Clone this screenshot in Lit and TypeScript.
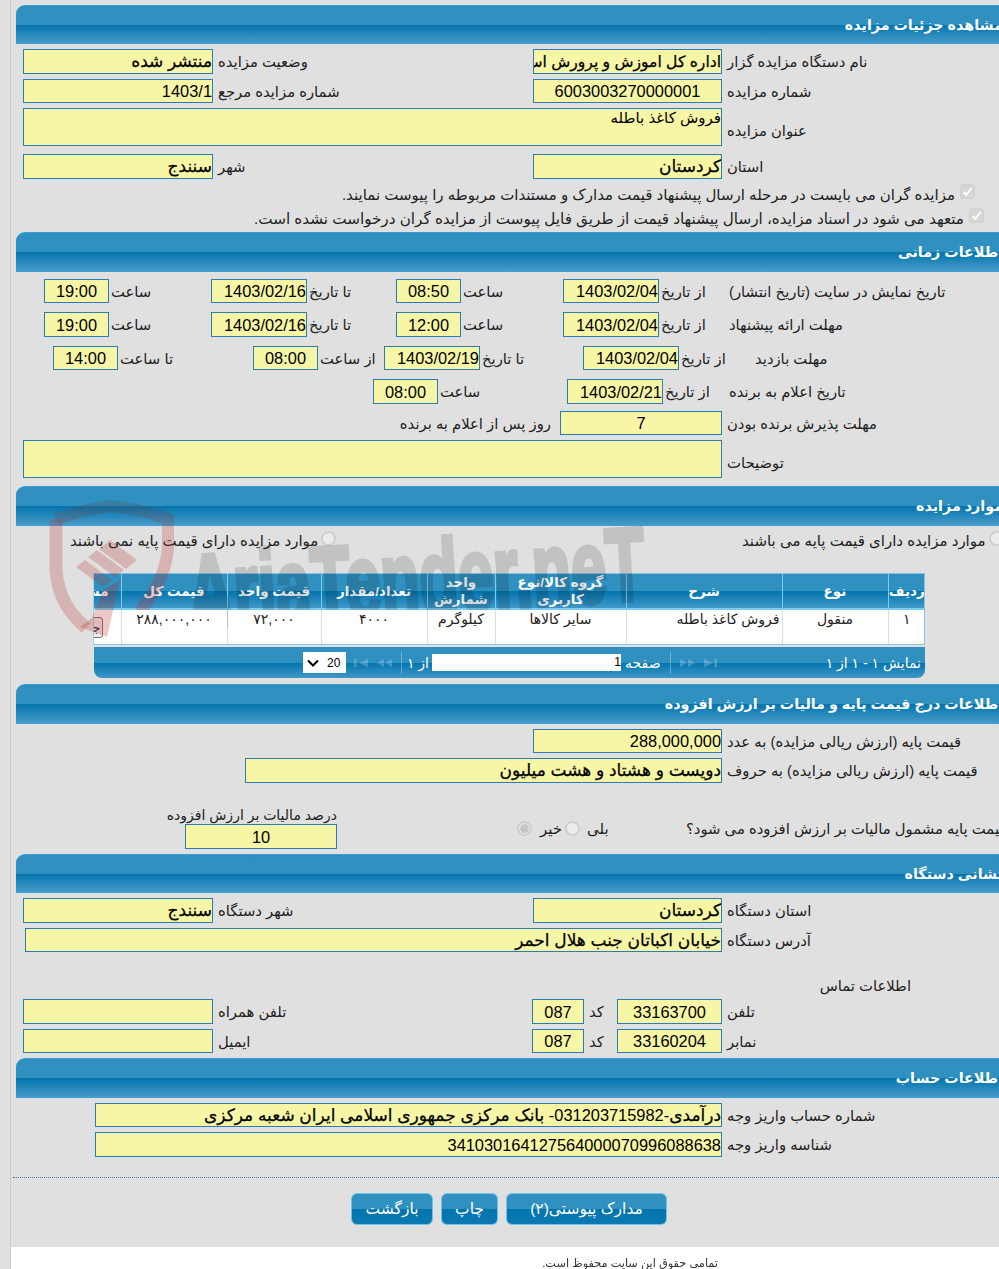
import { LitElement, html, css, svg } from "lit";
import { customElement } from "lit/decorators.js";

const f = (v: unknown, cls = "", ar = false) =>
  html`<div class="f ${cls} ${ar ? "ar" : ""}">${v}</div>`;
const lb = (t: string, cls = "") => html`<span class="lb ${cls}">${t}</span>`;
const cell = (...c: unknown[]) => html`<div class="cell">${c}</div>`;
const head = (t: string, cls = "") => html`<div class="hd ${cls}"><span>${t}</span></div>`;
const check = () => html`<span class="chk"><svg viewBox="0 0 15 15" width="15" height="15"><path d="M3.5 8 L6.3 11 L11.5 4" fill="none" stroke="#fff" stroke-width="2"/></svg></span>`;

const cols = ["radif","now","sharh","group","unit","qty","up","tp","act"];

@customElement("app-root")
export class AppRoot extends LitElement {
  static styles = css`
    :host { display:block; width:999px; height:1269px; overflow:hidden; position:relative; background:#e0e0e0;
      font-family:"Liberation Sans","DejaVu Sans",sans-serif; font-size:15px; color:#222; }
    .page { width:983px; margin-left:10px; padding-left:5px; border-left:1px solid #ccc; padding-top:5px; height:1264px; }
    .hd { width:992px; height:40px; box-sizing:border-box; border-top:1px solid #3a9bd8; border-bottom:1px solid #3f9fdc; border-top-left-radius:9px;
      background:linear-gradient(#2f90c0 0,#3090c0 50%,#0474ad 51%,#469bc9 100%); display:flex; justify-content:flex-end; align-items:center;
      padding-right:5px; direction:ltr; color:#fff; font-weight:bold; font-size:14.3px; margin-top:8px; }
    .hd span { direction:rtl; white-space:nowrap; }
    .hd.h39 { height:39px; }
    .hd.first { margin-top:0; }
    .hd.m6 { margin-top:6px; } .hd.m5 { margin-top:5px; }
    .body { padding-left:7px; }
    .row { display:grid; margin-top:5px; align-items:center; }
    .m7 { margin-top:7px; } .m8 { margin-top:8px; } .m9 { margin-top:9px; } .m3 { margin-top:3px; }
    .cell { display:flex; align-items:center; min-width:0; }
    .two { grid-template-columns:510px auto; }
    .one { grid-template-columns:auto; }
    .t12 { padding-left:21px; grid-template-columns:167px 185px 167px 164px auto; }
    .t3 { padding-left:30px; grid-template-columns:200px 131px 199px 144px auto; }
    .t4 { padding-left:350px; grid-template-columns:194px 160px auto; }
    .t12 .lb, .t3 .lb, .t4 .lb { padding-left:2px; }
    .t5 { grid-template-columns:537px auto; }
    .t5 .days { justify-self:end; margin-right:9px; }
    .contact { grid-template-columns:509px 85px auto; }
    .f { box-sizing:border-box; height:25px; border:1px solid #2b7db1; background:#f7f5a6; color:#000; direction:rtl; font-size:16.4px;
      white-space:nowrap; overflow:hidden; line-height:24px; flex:none; }
    .h24 { height:24px; line-height:23px; }
    .ar { font-weight:normal; font-size:17px; -webkit-text-stroke:.25px #000; }
    .ar.tight { font-size:15.6px; }
    .c { text-align:center; }
    .ta { height:38px; font-size:15px; line-height:18px; }
    .w699 { width:699px; } .w189 { width:189px; } .w190 { width:190px; } .w64 { width:65px; } .w95 { width:96px; }
    .w162 { width:162px; } .w477 { width:477px; } .w697 { width:697px; } .w152 { width:152px; } .w52 { width:52px; }
    .w105 { width:105px; } .w627 { width:627px; }
    .pad510 { width:510px; flex:none; } .pad222 { width:222px; flex:none; } .pad2 { width:2px; flex:none; } .pad72 { width:72px; flex:none; }
    .lb { direction:rtl; white-space:nowrap; padding-left:5px; font-size:14.8px; }
    .lb.low { margin-top:6px; }
    .lb.off { margin-left:26px; }
    .ck { display:flex; justify-content:flex-end; align-items:center; height:18px; gap:5px; direction:ltr; }
    .ck1 { margin-top:5px; padding-right:24px; } .ck2 { margin-top:6px; padding-right:15px; }
    .ck span.tx { direction:rtl; white-space:nowrap; font-size:15px; margin-top:4px; }
    .ck2 span.tx { font-size:15.2px; }
    .chk { width:15px; height:15px; background:#d6d6d6; border:1px solid #d0d0d0; border-radius:3px; box-sizing:border-box; display:block; margin-top:-4px; line-height:0; flex:none; }
    .chk svg { margin:-1px; }
    .radio { width:15px; height:15px; box-sizing:border-box; border-radius:50%; border:2px solid #cfcfcf; background:#ececec; flex:none; display:block; }
    .radio.on { background:#c6c6c6; box-shadow:inset 0 0 0 1px #ececec; }
    .rr { height:20px; margin-top:5px; padding-left:47px; grid-template-columns:672px auto; }
    .rr .lb { padding:0 3px 0 0; font-size:15px; }
    .rr .radio { margin-top:-5px; }
    .tw { width:832px; margin:22px 0 0 70px; overflow:hidden; box-sizing:border-box; border:1px solid #8ac0e0; border-left-color:#a7cfe6; background:#fff; }
    table { table-layout:fixed; width:831px; border-collapse:collapse; direction:rtl; }
    th { height:31px; padding:0; font-size:13.5px; line-height:17px; color:#fff; font-weight:bold; overflow:hidden;
      background:linear-gradient(#2f90c0 0,#3090c0 50%,#0474ad 51%,#3f98c8 100%); border-left:1px solid #79cdf0; border-bottom:2px solid #79cdf0; white-space:normal; }
    td { height:33px; padding:1px 0 0; font-size:14px; line-height:17px; vertical-align:top; text-align:center; border-left:1px solid #ddd; overflow:hidden; color:#222; background:#fff; position:relative; z-index:6; }
    td.r { text-align:right; padding-right:2px; }
    td.act { z-index:auto; background:transparent; }
    th:last-child, td:last-child { border-left:none; }
    th.clip { text-align:right; padding-right:12px; white-space:nowrap; }
    col.radif { width:37px; } col.now { width:106px; } col.sharh { width:156px; } col.group { width:131px; }
    col.unit { width:68px; } col.qty { width:106px; } col.up { width:94px; } col.tp { width:106px; } col.act { width:27px; }
    .cbtn { display:block; width:30px; height:21px; margin:6px 18px 0 0; box-sizing:border-box; border:1px solid #777; border-radius:3px; background:#eee; text-align:right; line-height:19px; font-size:13px; direction:rtl; padding-right:1px; color:#222; white-space:nowrap; overflow:hidden; }
    .pager { width:831px; height:31px; margin:2px 0 0 71px; box-sizing:border-box; border-radius:0 0 8px 8px; display:flex; align-items:center; color:#fff; font-size:14px;
      background:linear-gradient(#2f90c0 0,#3090c0 50%,#0474ad 51%,#3f98c8 100%); position:relative; }
    .pager span { direction:rtl; white-space:nowrap; }
    .sel { width:43px; height:21px; margin-left:209px; background:#fff; color:#000; font-size:12px; display:flex; align-items:center; gap:8px; padding-left:4px; box-sizing:border-box; flex:none; }
    .pi { fill:#fff; opacity:.22; flex:none; }
    .m8l { margin-left:8px; } .m9l { margin-left:9px; }
    .sep { width:1px; height:22px; background:rgba(255,255,255,.3); margin-left:9px; flex:none; }
    .pinp { width:189px; height:17px; margin-left:3px; background:#fff; color:#000; text-align:right; font-size:12px; line-height:17px; box-sizing:border-box; flex:none; }
    .pager .of { margin-left:6px; width:21px; } .pager .pg { margin-left:4px; }
    .pager .sum { margin-left:auto; margin-right:4px; }
    .r3 { padding-left:146px; grid-template-columns:348px 169px auto; margin-top:24px; align-items:end; }
    .tax { display:flex; flex-direction:column; align-items:flex-end; width:168px; }
    .tax .lb { padding:0; height:17px; line-height:17px; font-size:14px; }
    .rad { display:flex; align-items:center; height:25px; margin-bottom:8px; }
    .rad .g1 { margin:0 3px 0 8px; font-size:15px; direction:rtl; } .rad .g2 { margin:0 0 0 7px; font-size:15px; direction:rtl; }
    .q { height:25px; display:flex; align-items:center; margin-bottom:8px; }
    .q .lb { padding-left:0; }
    .ct { margin:24px 0 0 798px; height:20px; line-height:20px; direction:rtl; white-space:nowrap; display:block; width:90px; font-size:14.8px; }
    .dots { margin:20px 0 0 -10px; width:1000px; border-top:1px dotted #2b7db1; }
    .btns { display:flex; gap:8px; margin:15px 0 0 328px; direction:ltr; }
    .btn { height:32px; box-sizing:border-box; border:1px solid #6fc3e8; border-radius:6px; color:#fff; font-size:15.5px; line-height:30px; text-align:center; direction:rtl;
      background:linear-gradient(#3090c0 0,#3090c0 50%,#0474ad 51%,#0c7ab2 100%); white-space:nowrap; }
    .b1 { width:82px; } .b2 { width:57px; } .b3 { width:161px; }
    .foot { margin:22px 0 0 -5px; height:60px; width:1000px; background:#fff; padding-top:9px; box-sizing:border-box; }
    .foot span { display:block; margin-left:519px; width:188px; direction:rtl; font-size:11.3px; color:#333; white-space:nowrap; filter:blur(.35px); line-height:14px; }
    .wm { position:absolute; left:0; top:0; pointer-events:none; z-index:5; }
  `;

  private watermark() {
    return html`<svg class="wm" width="999" height="700" viewBox="0 0 999 700">
      ${svg`
      <defs><linearGradient id="sg" x1="0" y1="0" x2="0" y2="1">
        <stop offset="0" stop-color="rgba(90,60,60,.22)"/><stop offset=".25" stop-color="rgba(190,40,40,.24)"/><stop offset="1" stop-color="rgba(200,30,30,.26)"/>
      </linearGradient></defs>
      <path d="M56 519 C78 512 95 508 110 506 C130 508 150 512 168 519 L168 548 C166 572 156 590 140 612" fill="none" stroke="url(#sg)" stroke-width="12"/>
      <path d="M56 519 L56 570 C58 596 68 612 86 628" fill="none" stroke="rgba(190,40,40,.24)" stroke-width="13"/>
      <polygon points="76,567 85,560 112,580 103,587" fill="rgba(190,40,40,.24)"/>
      <polygon points="88,557 97,550 124,570 115,577" fill="rgba(190,40,40,.24)"/>
      <polygon points="99,549 110,540 137,560 126,569" fill="rgba(190,40,40,.24)"/>
      <polygon points="103,590 120,580 107,637 80,627 92,618" fill="rgba(190,40,40,.26)"/>
      <g opacity=".13"><text x="190" y="628" transform="rotate(-3.6 190 628)" textLength="458" lengthAdjust="spacingAndGlyphs"
        font-family="Liberation Sans" font-weight="bold" font-size="104" fill="#000" stroke="#000" stroke-width="5">AriaTender.neT</text></g>
      `}
    </svg>`;
  }

  render() {
    const rows = [["۱","منقول","فروش کاغذ باطله","سایر کالاها","کیلوگرم","۴۰۰۰","۷۲,۰۰۰","۲۸۸,۰۰۰,۰۰۰"]];
    return html`
      <div class="page">
        ${head("مشاهده جزئیات مزایده", "first h39")}
        <div class="body">
          <div class="row two">${cell(f("منتشر شده","w190",true),lb("وضعیت مزایده"))}${cell(f("اداره کل اموزش و پرورش استان کردستان","w189 tight",true),lb("نام دستگاه مزایده گزار"))}</div>
          <div class="row two">${cell(f("1403/1","w190 h24"),lb("شماره مزایده مرجع"))}${cell(f("6003003270000001","w189 h24 c"),lb("شماره مزایده"))}</div>
          <div class="row one">${cell(f("فروش کاغذ باطله","w699 ta"),lb("عنوان مزایده","low"))}</div>
          <div class="row two m8">${cell(f("سنندج","w190",true),lb("شهر"))}${cell(f("کردستان","w189",true),lb("استان"))}</div>
        </div>
        <div class="ck ck1"><span class="tx">مزایده گران می بایست در مرحله ارسال پیشنهاد قیمت مدارک و مستندات مربوطه را پیوست نمایند.</span>${check()}</div>
        <div class="ck ck2"><span class="tx">متعهد می شود در اسناد مزایده، ارسال پیشنهاد قیمت از طریق فایل پیوست از مزایده گران درخواست نشده است.</span>${check()}</div>

        ${head("اطلاعات زمانی","m6")}
        <div class="body">
          <div class="row t12 m7">
            ${cell(f("19:00","w64 h24 c"),lb("ساعت"))}${cell(f("1403/02/16","w95 h24"),lb("تا تاریخ"))}${cell(f("08:50","w64 h24 c"),lb("ساعت"))}${cell(f("1403/02/04","w95 h24"),lb("از تاریخ"))}${cell(lb("تاریخ نمایش در سایت (تاریخ انتشار)"))}
          </div>
          <div class="row t12 m9">
            ${cell(f("19:00","w64 c"),lb("ساعت"))}${cell(f("1403/02/16","w95"),lb("تا تاریخ"))}${cell(f("12:00","w64 c"),lb("ساعت"))}${cell(f("1403/02/04","w95"),lb("از تاریخ"))}${cell(lb("مهلت ارائه پیشنهاد"))}
          </div>
          <div class="row t3 m9">
            ${cell(f("14:00","w64 h24 c"),lb("تا ساعت"))}${cell(f("08:00","w64 h24 c"),lb("از ساعت"))}${cell(f("1403/02/19","w95 h24"),lb("تا تاریخ"))}${cell(f("1403/02/04","w95 h24"),lb("از تاریخ"))}${cell(lb("مهلت بازدید","off"))}
          </div>
          <div class="row t4 m9">
            ${cell(f("08:00","w64 c"),lb("ساعت"))}${cell(f("1403/02/21","w95"),lb("از تاریخ"))}${cell(lb("تاریخ اعلام به برنده"))}
          </div>
          <div class="row t5 m7">
            <div class="cell days">${lb("روز پس از اعلام به برنده")}</div>
            ${cell(f(7,"w162 h24 c"),lb("مهلت پذیرش برنده بودن"))}
          </div>
          <div class="row one">${cell(f("","w699 ta"),lb("توضیحات","low"))}</div>
        </div>

        ${head("موارد مزایده")}
        <div class="body">
          <div class="row rr">
            ${cell(html`<span class="lb">موارد مزایده دارای قیمت پایه نمی باشند</span>`,html`<span class="radio"></span>`)}
            ${cell(html`<span class="lb">موارد مزایده دارای قیمت پایه می باشند</span>`,html`<span class="radio"></span>`)}
          </div>
          <div class="tw">
            <table>
              <colgroup>${cols.map((c) => html`<col class=${c} />`)}</colgroup>
              <thead><tr>
                <th>ردیف</th><th>نوع</th><th>شرح</th><th>گروه کالا/نوع کاربری</th><th>واحد شمارش</th><th>تعداد/مقدار</th><th>قیمت واحد</th><th>قیمت کل</th><th class="clip">مشاهده</th>
              </tr></thead>
              <tbody>
                ${rows.map((r) => html`<tr>
                  <td>${r[0]}</td><td>${r[1]}</td><td class="r">${r[2]}</td><td>${r[3]}</td><td>${r[4]}</td><td>${r[5]}</td><td>${r[6]}</td><td>${r[7]}</td>
                  <td class="act"><span class="cbtn">جزئیات</span></td>
                </tr>`)}
              </tbody>
            </table>
          </div>
          <div class="pager">
            <div class="sel"><svg width="12" height="8" viewBox="0 0 12 8"><path d="M1 1.5 L6 6.5 L11 1.5" fill="none" stroke="#000" stroke-width="2"/></svg><span>20</span></div>
            <svg class="pi m8l" width="14" height="10" viewBox="0 0 14 10"><rect x="0" y="1" width="2.5" height="8"/><path d="M14 1 V9 L5 5Z"/></svg>
            <svg class="pi m9l" width="15" height="10" viewBox="0 0 15 10"><path d="M7 1 V9 L0 5Z M15 1 V9 L8 5Z"/></svg>
            <div class="sep"></div>
            <span class="of">از ۱</span>
            <div class="pinp">1</div>
            <span class="pg">صفحه</span>
            <div class="sep"></div>
            <svg class="pi m9l" width="15" height="10" viewBox="0 0 15 10"><path d="M0 1 V9 L7 5Z M8 1 V9 L15 5Z"/></svg>
            <svg class="pi m9l" width="13" height="10" viewBox="0 0 13 10"><path d="M0 1 V9 L9 5Z"/><rect x="10.5" y="1" width="2.5" height="8"/></svg>
            <span class="sum">نمایش ۱ - ۱ از ۱</span>
          </div>
        </div>

        ${head("اطلاعات درج قیمت پایه و مالیات بر ارزش افزوده","m6")}
        <div class="body">
          <div class="row one"><div class="cell"><div class="pad510"></div>${f("288,000,000","w189 h24")}${lb("قیمت پایه (ارزش ریالی مزایده) به عدد")}</div></div>
          <div class="row one"><div class="cell"><div class="pad222"></div>${f("دویست و هشتاد و هشت میلیون","w477",true)}${lb("قیمت پایه (ارزش ریالی مزایده) به حروف")}</div></div>
          <div class="row r3">
            <div class="tax"><span class="lb">درصد مالیات بر ارزش افزوده</span>${f(10,"w152 c")}</div>
            <div class="rad"><span class="radio on"></span><span class="g1">خیر</span><span class="radio"></span><span class="g2">بلی</span></div>
            <div class="q">${lb("قیمت پایه مشمول مالیات بر ارزش افزوده می شود؟")}</div>
          </div>
        </div>

        ${head("نشانی دستگاه","m5 h39")}
        <div class="body">
          <div class="row two">${cell(f("سنندج","w190",true),lb("شهر دستگاه"))}${cell(f("کردستان","w189",true),lb("استان دستگاه"))}</div>
          <div class="row one"><div class="cell"><div class="pad2"></div>${f("خیابان اکباتان جنب هلال احمر","w697 h24",true)}${lb("آدرس دستگاه")}</div></div>
          <span class="ct">اطلاعات تماس</span>
          <div class="row contact m3">${cell(f("","w190"),lb("تلفن همراه"))}${cell(f("087","w52 c"),lb("کد"))}${cell(f("33163700","w105 c"),lb("تلفن"))}</div>
          <div class="row contact">${cell(f("","w190 h24"),lb("ایمیل"))}${cell(f("087","w52 h24 c"),lb("کد"))}${cell(f("33160204","w105 h24 c"),lb("نمابر"))}</div>
        </div>

        ${head("اطلاعات حساب","m5")}
        <div class="body">
          <div class="row one"><div class="cell"><div class="pad72"></div><div class="f w627 h24"><span class="ar">درآمدی</span>-031203715982- <span class="ar">بانک مرکزی جمهوری اسلامی ایران شعبه مرکزی</span></div>${lb("شماره حساب واریز وجه")}</div></div>
          <div class="row one"><div class="cell"><div class="pad72"></div>${f("341030164127564000070996088638","w627")}${lb("شناسه واریز وجه")}</div></div>
          <div class="dots"></div>
          <div class="btns"><div class="btn b1">بازگشت</div><div class="btn b2">چاپ</div><div class="btn b3">مدارک پیوستی(۲)</div></div>
        </div>
        <div class="foot"><span>تمامی حقوق این سایت محفوظ است.</span></div>
      </div>
      ${this.watermark()}
    `;
  }
}
